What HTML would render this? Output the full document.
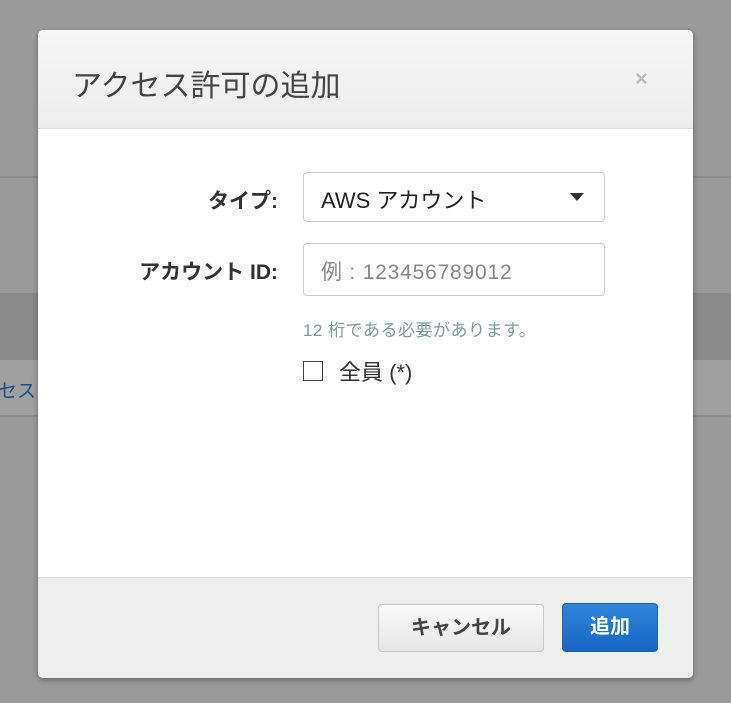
<!DOCTYPE html>
<html><head><meta charset="utf-8"><style>
*{box-sizing:border-box;margin:0;padding:0}
body{width:731px;height:703px;background:#9a9a9a;position:relative;overflow:hidden;font-family:"Liberation Sans","Noto Sans CJK JP",sans-serif}
.abs{position:absolute}
.dlg{left:38px;top:30px;width:655px;height:648px;background:#fff;border-radius:5px;box-shadow:0 2px 6px rgba(0,0,0,.35);overflow:hidden}
.hd{left:0;top:0;width:655px;height:99px;background:linear-gradient(#f6f6f6,#ededed);border-bottom:1px solid #ddd}
.ft{left:0;top:547px;width:655px;height:101px;background:#eee;border-top:1px solid #ddd}
.lbl{font-weight:bold;font-size:21px;color:#333;text-align:right;width:240px;white-space:nowrap}
.box{border:1px solid #ccc;border-radius:4px;background:#fff}
</style></head><body>
<div class="abs" style="left:0;top:176px;width:731px;height:2px;background:#8c8c8c"></div>
<div class="abs" style="left:0;top:293px;width:731px;height:67px;background:#8a8a8a"></div>
<div class="abs" style="left:0;top:360px;width:731px;height:55px;background:#9f9f9f"></div>
<div class="abs" style="left:0;top:415px;width:731px;height:2px;background:#8c8c8c"></div>
<div class="abs" style="left:-2px;top:376px;font-size:19px;color:#1a4f8a">セス</div>
<div class="abs dlg">
 <div class="abs hd"></div>
 <div class="abs" style="left:34px;top:31px;font-size:30px;color:#444">アクセス許可の追加</div>
 <div class="abs" style="left:597px;top:36px;font-size:22px;font-weight:bold;color:#bbb">×</div>
 <div class="abs lbl" style="left:0;top:155px">タイプ:</div>
 <div class="abs box" style="left:265px;top:142px;width:302px;height:50px"></div>
 <div class="abs" style="left:283px;top:153px;font-size:22px;color:#222">AWS アカウント</div>
 <div class="abs" style="left:532px;top:163px;width:0;height:0;border-left:7px solid transparent;border-right:7px solid transparent;border-top:8px solid #333"></div>
 <div class="abs lbl" style="left:0;top:226px">アカウント ID:</div>
 <div class="abs box" style="left:265px;top:213px;width:302px;height:53px"></div>
 <div class="abs" style="left:283px;top:226px;font-size:21px;color:#888;letter-spacing:0.8px">例 : 123456789012</div>
 <div class="abs" style="left:265px;top:286px;font-size:17px;color:#7e9a9a;letter-spacing:0.5px">12 桁である必要があります。</div>
 <div class="abs" style="left:265px;top:331px;width:20px;height:20px;border:1.5px solid #444;background:#fff"></div>
 <div class="abs" style="left:301px;top:325px;font-size:22px;color:#333">全員 (*)</div>
 <div class="abs ft"></div>
 <div class="abs" style="left:340px;top:574px;width:166px;height:48px;border:1px solid #c8c8c8;border-radius:4px;background:linear-gradient(#fafafa,#e6e6e6);font-size:20px;font-weight:bold;color:#444;text-align:center;line-height:46px">キャンセル</div>
 <div class="abs" style="left:524px;top:573px;width:96px;height:49px;border:1px solid #1a5fb4;border-radius:4px;background:linear-gradient(#2f86dc,#1566c0);font-size:20px;font-weight:bold;color:#fff;text-align:center;line-height:47px">追加</div>
</div>
</body></html>
